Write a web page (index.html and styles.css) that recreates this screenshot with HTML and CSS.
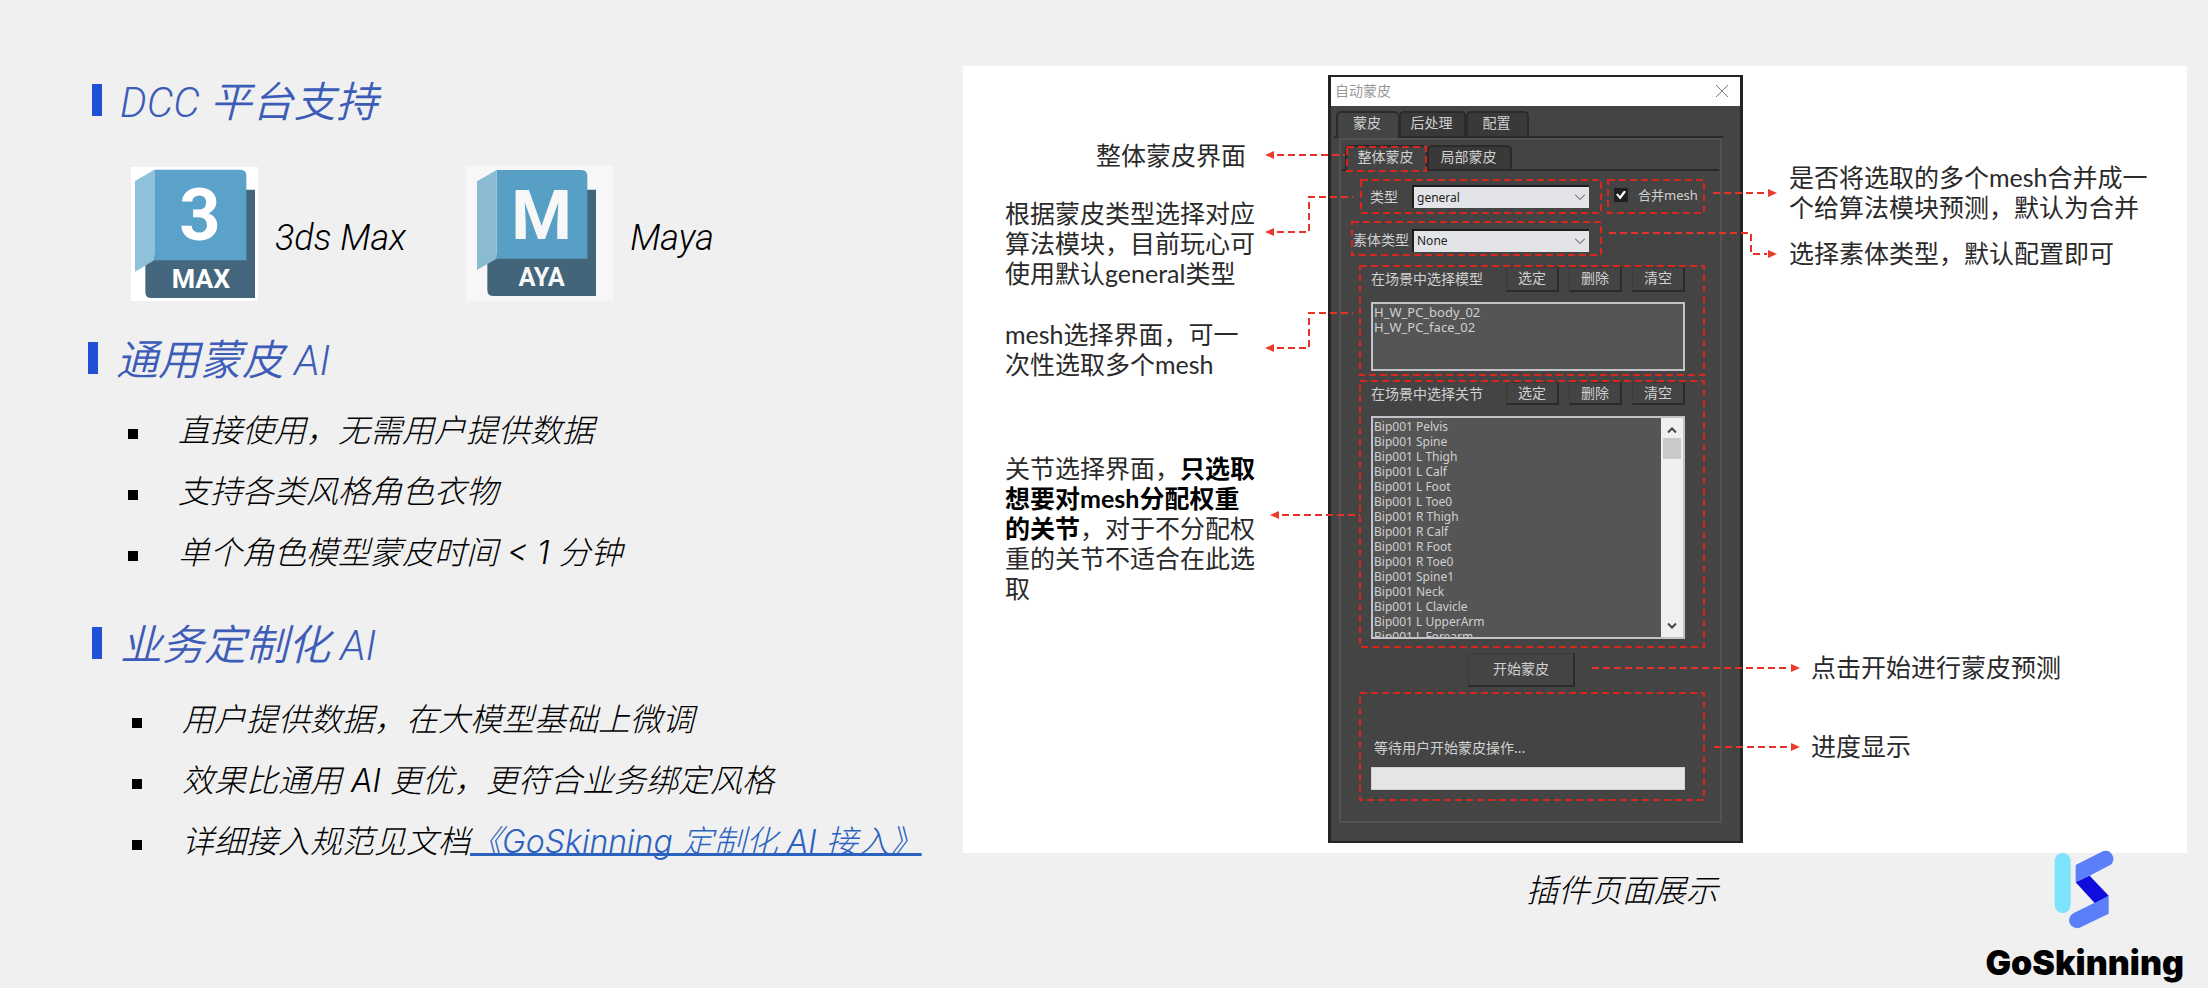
FILE: index.html
```html
<!DOCTYPE html>
<html lang="zh-CN">
<head>
<meta charset="utf-8">
<title>GoSkinning</title>
<link rel="stylesheet" href="styles.css">
</head>
<body>
<main class="slide">
  <div class="intro">
    <section class="topic">
      <h2 class="topic-title">DCC 平台支持</h2>
      <div class="platforms">
        <div class="platform">
          <svg class="platform-icon" width="127" height="134" viewBox="33 36 381 402" aria-hidden="true">
            <rect x="33" y="36" width="381" height="402" fill="#fff"/>
            <path d="M76 300H360V104H405V429H94Q76 429 76 411Z" fill="#44677d"/>
            <path d="M103 44H361Q379 44 379 62V316H103Z" fill="#5aa2c9"/>
            <path d="M45 78L103 44V316L45 350Z" fill="#8ec2da"/>
            <text class="icon-letter" x="240" y="256" text-anchor="middle" font-size="216">3</text>
            <text class="icon-letter" x="243" y="398" text-anchor="middle" font-size="80">MAX</text>
          </svg>
          <span class="platform-name">3ds Max</span>
        </div>
        <div class="platform">
          <svg class="platform-icon" width="147" height="135" viewBox="36 33 441 405" aria-hidden="true">
            <rect x="36" y="33" width="441" height="405" fill="#f7f7f7"/>
            <path d="M100 300H380V104H426V423H119Q100 423 100 404Z" fill="#42657a"/>
            <path d="M128 45H382Q400 45 400 63V311H128Z" fill="#579fc4"/>
            <path d="M69 79L128 45V311L69 345Z" fill="#8abbd3"/>
            <text class="icon-letter dim" x="263" y="252" text-anchor="middle" font-size="208">M</text>
            <text class="icon-letter dim" x="263" y="393" text-anchor="middle" font-size="76">AYA</text>
          </svg>
          <span class="platform-name">Maya</span>
        </div>
      </div>
    </section>
    <section class="topic topic-general">
      <h2 class="topic-title">通用蒙皮 AI</h2>
      <ul class="points">
        <li>直接使用，无需用户提供数据</li>
        <li>支持各类风格角色衣物</li>
        <li>单个角色模型蒙皮时间 &lt; 1 分钟</li>
      </ul>
    </section>
    <section class="topic topic-custom">
      <h2 class="topic-title">业务定制化 AI</h2>
      <ul class="points">
        <li>用户提供数据，在大模型基础上微调</li>
        <li>效果比通用 AI 更优，更符合业务绑定风格</li>
        <li><span>详细接入规范见文档<a class="doc-link" href="#doc">《GoSkinning 定制化 AI 接入》</a></span></li>
      </ul>
    </section>
  </div>

  <div class="demo">
    <div class="stage">
      <div class="notes notes-left">
        <p class="note note-ui">整体蒙皮界面</p>
        <p class="note note-type">根据蒙皮类型选择对应算法模块，目前玩心可使用默认general类型</p>
        <p class="note note-mesh">mesh选择界面，可一次性选取多个mesh</p>
        <p class="note note-joint">关节选择界面，<b>只选取想要对mesh分配权重的关节</b>，对于不分配权重的关节不适合在此选取</p>
      </div>

      <div class="window">
        <div class="titlebar">
          <span>自动蒙皮</span>
          <button class="close" type="button" aria-label="关闭"><svg width="12" height="12" viewBox="0 0 12 12"><path d="M0 0L12 12M12 0L0 12" stroke="#777" fill="none"/></svg></button>
        </div>
        <div class="tabs">
          <button class="tab active" type="button">蒙皮</button>
          <button class="tab" type="button">后处理</button>
          <button class="tab" type="button">配置</button>
        </div>
        <div class="panel">
          <div class="tabs subtabs">
            <button class="tab active framed" type="button">整体蒙皮<svg class="frame"><rect width="100%" height="100%"/></svg></button>
            <button class="tab" type="button">局部蒙皮</button>
          </div>
          <div class="row">
            <div class="framed field">
              <label for="kind">类型</label>
              <span class="picker"><select id="kind"><option>general</option></select><svg class="chevron" width="10" height="6" viewBox="0 0 10 6"><path d="M0 0.500L5 5.500L10 0.500"/></svg></span>
              <svg class="frame"><rect width="100%" height="100%"/></svg>
            </div>
            <div class="framed merge">
              <input type="checkbox" id="merge" checked>
              <label for="merge">合并mesh</label>
              <svg class="frame"><rect width="100%" height="100%"/></svg>
            </div>
          </div>
          <div class="framed field body-type">
            <label for="body">素体类型</label>
            <span class="picker"><select id="body"><option>None</option></select><svg class="chevron" width="10" height="6" viewBox="0 0 10 6"><path d="M0 0.500L5 5.500L10 0.500"/></svg></span>
            <svg class="frame"><rect width="100%" height="100%"/></svg>
          </div>
          <div class="framed group models">
            <div class="group-head">
              <span class="group-label">在场景中选择模型</span>
              <button class="btn" type="button">选定</button>
              <button class="btn" type="button">删除</button>
              <button class="btn" type="button">清空</button>
            </div>
            <div class="listbox">
              <ul>
                <li>H_W_PC_body_02</li>
                <li>H_W_PC_face_02</li>
              </ul>
            </div>
            <svg class="frame"><rect width="100%" height="100%"/></svg>
          </div>
          <div class="framed group joints">
            <div class="group-head">
              <span class="group-label">在场景中选择关节</span>
              <button class="btn" type="button">选定</button>
              <button class="btn" type="button">删除</button>
              <button class="btn" type="button">清空</button>
            </div>
            <div class="listbox">
              <ul>
                <li>Bip001 Pelvis</li>
                <li>Bip001 Spine</li>
                <li>Bip001 L Thigh</li>
                <li>Bip001 L Calf</li>
                <li>Bip001 L Foot</li>
                <li>Bip001 L Toe0</li>
                <li>Bip001 R Thigh</li>
                <li>Bip001 R Calf</li>
                <li>Bip001 R Foot</li>
                <li>Bip001 R Toe0</li>
                <li>Bip001 Spine1</li>
                <li>Bip001 Neck</li>
                <li>Bip001 L Clavicle</li>
                <li>Bip001 L UpperArm</li>
                <li>Bip001 L Forearm</li>
              </ul>
              <div class="scrollbar">
                <svg width="10" height="6" viewBox="0 0 10 6"><path d="M1 5.500L5 1.500L9 5.500"/></svg>
                <span class="thumb"></span>
                <svg class="down" width="10" height="6" viewBox="0 0 10 6"><path d="M1 0.500L5 4.500L9 0.500"/></svg>
              </div>
            </div>
            <svg class="frame"><rect width="100%" height="100%"/></svg>
          </div>
          <button class="btn start" type="button">开始蒙皮</button>
          <div class="framed group progress">
            <span class="group-label" id="status">等待用户开始蒙皮操作...</span>
            <div class="bar" role="progressbar" aria-labelledby="status"></div>
            <svg class="frame"><rect width="100%" height="100%"/></svg>
          </div>
        </div>
      </div>

      <div class="notes notes-right">
        <p class="note note-merge">是否将选取的多个mesh合并成一个给算法模块预测，默认为合并</p>
        <p class="note note-body">选择素体类型，默认配置即可</p>
        <p class="note note-start">点击开始进行蒙皮预测</p>
        <p class="note note-progress">进度显示</p>
      </div>

      <svg class="connectors" viewBox="0 0 1224 787" preserveAspectRatio="none" aria-hidden="true">
        <g class="lines">
          <path d="M314 89H382"/>
          <path d="M314 166H346V131H390"/>
          <path d="M314 282H346V247H390"/>
          <path d="M319 449H397"/>
          <path d="M750 127H804"/>
          <path d="M646 167H788V188H804"/>
          <path d="M629 602H827"/>
          <path d="M751 681H827"/>
        </g>
        <g class="heads">
          <path d="M302 89L311 85V93Z"/>
          <path d="M302 166L311 162V170Z"/>
          <path d="M302 282L311 278V286Z"/>
          <path d="M307 449L316 445V453Z"/>
          <path d="M814 127L805 123V131Z"/>
          <path d="M814 188L805 184V192Z"/>
          <path d="M837 602L828 598V606Z"/>
          <path d="M837 681L828 677V685Z"/>
        </g>
      </svg>
    </div>
    <div class="footer">
      <p class="caption">插件页面展示</p>
      <div class="brand">
        <svg class="brand-mark" width="62" height="80" viewBox="940 687 186 240" aria-hidden="true">
          <rect x="942" y="699" width="48" height="180" rx="24" fill="#7de4fc"/>
          <path d="M1005 735L1088 693A24 24 0 0 1 1110 734L1047 767L1005 787Z" fill="#5a7ff8"/>
          <path d="M1104 827V881L1020 922A23 23 0 0 1 998 880Z" fill="#5a7ff8"/>
          <path d="M1005 787L1047 767L1104 827L1062 849Z" fill="#0e0ddb"/>
        </svg>
        <span class="brand-name">GoSkinning</span>
      </div>
    </div>
  </div>
</main>
</body>
</html>
```
FILE: styles.css
```css
* { box-sizing: border-box; }
body {
  margin: 0;
  background: #f0f0f0;
  color: #000;
  font-family: Roboto, "Noto Sans CJK SC", sans-serif;
}
h2, p, ul { margin: 0; padding: 0; }
ul { list-style: none; }
button { font: inherit; color: inherit; margin: 0; padding: 0; }

.slide {
  display: grid;
  grid-template-columns: 963fr 1245fr;
  min-height: 100vh;
  padding-top: 66px;
}

/* Left column */
.intro { padding: 10px 0 0 88px; font-style: italic; font-weight: 300; white-space: nowrap; }
.topic { padding-left: 4px; }
.topic-title {
  display: flex;
  align-items: center;
  gap: 18px;
  height: 50px;
  padding-bottom: 5px;
  color: #3d5cb8;
  font-size: 42px;
  font-weight: 350;
}
.topic-title::before { content: ""; width: 10px; height: 32px; margin-top: 3px; background: #1f50d6; }
.platforms { display: flex; gap: 60px; margin-top: 40px; padding-left: 39px; }
.platform { display: flex; align-items: center; gap: 17px; }
.platform-icon { display: block; }
.platform-name { padding-top: 8px; font-size: 36px; font-weight: 300; }
.icon-letter { fill: #fff; font-family: Roboto, sans-serif; font-style: normal; font-weight: 700; }
.icon-letter.dim { fill: #f7f7f7; }
.topic-general { margin-top: 33px; padding-left: 0; }
.topic-custom { margin-top: 37px; }
.points { padding: 15px 0 0 40px; font-family: Inter, "Noto Sans CJK SC", sans-serif; }
.topic-custom .points { padding-top: 19px; }
.points li { display: flex; align-items: center; gap: 40px; height: 61px; padding-bottom: 4px; font-size: 32px; }
.points li::before { content: ""; width: 10px; height: 10px; margin-top: 12px; background: #000; }
.doc-link {
  color: #2b62c0;
  text-decoration: underline;
  text-decoration-thickness: 3px;
  text-decoration-skip-ink: none;
  text-underline-offset: 0;
}

/* Annotated plug-in window */
.demo { padding-right: 21px; }
.stage { position: relative; display: flex; padding: 9px 0 10px; background: #fff; }
.notes { flex: 1 1 365px; font-family: Lato, "Noto Sans CJK SC", sans-serif; font-size: 25px; line-height: 30px; color: #2a2a2a; }
.notes-left { padding-left: 42px; }
.notes-left .note { max-width: 252px; }
.note-ui { margin-top: 65px; padding-left: 91px; }
.note-type { margin-top: 28px; }
.note-mesh { margin-top: 31px; }
.note-joint { margin-top: 74px; }
.notes-right { flex-basis: 444px; padding-left: 46px; }
.notes-right .note { max-width: 366px; }
.note-merge { margin-top: 87px; }
.note-body { margin-top: 16px; }
.note-start { margin-top: 384px; padding-left: 22px; }
.note-progress { margin-top: 49px; padding-left: 22px; }
.note b { color: #000; }

.connectors { position: absolute; inset: 0; width: 100%; height: 100%; pointer-events: none; }
.lines path { fill: none; stroke: #e8312b; stroke-width: 2; stroke-dasharray: 7 4; }
.heads path { fill: #ee3a2c; }

.window {
  flex: 0 0 415px;
  border: solid #242424;
  border-width: 2px 3px;
  background: #444;
  color: #d0d0d0;
  font-family: "Noto Sans", "Noto Sans CJK SC", sans-serif;
  font-size: 14px;
  line-height: 20px;
}
.titlebar {
  display: flex;
  align-items: center;
  justify-content: space-between;
  height: 29px;
  padding: 0 12px 2px 4px;
  background: #fff;
  color: #999;
}
.close { display: flex; border: 0; background: none; }
.tabs { display: flex; height: 27px; margin: 5px 17px 0 3px; padding-left: 2px; border-bottom: 2px solid #2a2a2a; }
.tab {
  width: 67px;
  padding: 0 2px 3px 0;
  border: 2px solid #2a2a2a;
  border-bottom: 0;
  border-radius: 5px 5px 0 0;
  background: #393939;
}
.tab.active { width: 63px; margin-bottom: -2px; padding-bottom: 5px; border-right-width: 1px; background: #444; }
.tab:last-child { width: 63px; }
.panel { margin: 0 18px 18px 8px; border: 2px solid #525252; }
.subtabs { height: 26px; margin: 5px 1px 0; padding-left: 3px; }
.subtabs .tab.active { width: 82px; }
.subtabs .tab:last-child { width: 85px; }

.framed { position: relative; }
.frame { position: absolute; inset: 0; width: 100%; height: 100%; overflow: visible; pointer-events: none; }
.frame rect { fill: none; stroke: #d8261f; stroke-width: 2; stroke-dasharray: 7 4; }

.row { display: flex; gap: 7px; margin: 9px 0 0 20px; }
.field { display: flex; align-items: center; justify-content: space-between; width: 240px; height: 33px; padding: 0 12px 0 9px; }
.body-type { width: 249px; margin: 9px 0 0 11px; padding-top: 3px; padding-left: 1px; }
.picker { position: relative; display: flex; width: 177px; }
.picker select {
  width: 100%;
  height: 23px;
  padding: 0 3px;
  border: 0 solid #1d1d1d;
  border-width: 2px 0 0 2px;
  border-radius: 0;
  appearance: none;
  background: #e2e4e8;
  color: #222;
  font: 12px/20px "Noto Sans", sans-serif;
}
.chevron { position: absolute; right: 4px; top: 9px; }
.chevron path { fill: none; stroke: #444; }
.merge { display: flex; align-items: center; gap: 10px; width: 96px; height: 33px; padding: 0 0 3px 6px; font-size: 13px; }
.merge label { white-space: nowrap; }
.merge input {
  flex: none;
  display: grid;
  place-items: center;
  width: 14px;
  height: 14px;
  margin: 0;
  appearance: none;
  background: #1f1f1f;
}
.merge input:checked::after {
  content: "";
  width: 10px;
  height: 9px;
  background: #fff;
  clip-path: polygon(0 45%, 18% 32%, 38% 60%, 82% 0, 100% 14%, 42% 100%);
}

.group { width: 344px; margin-left: 19px; padding: 0 19px 0 11px; }
.models { margin-top: 11px; padding-bottom: 4px; }
.joints { margin-top: 6px; padding-bottom: 8px; }
.group-head { display: flex; align-items: stretch; gap: 10px; height: 26px; padding-top: 1px; line-height: 24px; }
.joints .group-head { height: 24px; }
.group-label { flex: 1; white-space: nowrap; }
.btn {
  width: 53px;
  padding-bottom: 2px;
  border: solid #2b2b2b;
  border-width: 1px 2px 2px 1px;
  border-color: #3a3a3a #2b2b2b #2b2b2b #3a3a3a;
  background: #444;
  line-height: 20px;
}
.listbox {
  display: flex;
  margin-top: 10px;
  border: 2px solid #c2c3c8;
  background: #555;
  overflow: hidden;
  font-size: 13px;
  line-height: 15px;
}
.listbox ul { flex: 1; padding: 1px 0 0 1px; white-space: nowrap; }
.models .listbox { height: 69px; }
.joints .listbox { height: 223px; margin-top: 11px; font-size: 12px; }
.scrollbar { display: flex; flex-direction: column; align-items: center; width: 22px; padding: 9px 0 8px; background: #f0f0f0; }
.scrollbar path { fill: none; stroke: #444; stroke-width: 2; }
.scrollbar .down { margin-top: auto; }
.thumb { width: 18px; height: 21px; margin-top: 5px; background: #c9c9c9; }
.start { display: block; width: 107px; height: 34px; margin: 6px 0 0 127px; }
.progress { display: flex; flex-direction: column; margin-top: 6px; margin-bottom: 21px; padding-top: 45px; padding-bottom: 10px; }
.progress .group-label { flex: none; padding-left: 3px; }
.bar { height: 23px; margin-top: 9px; border: 1px solid #d2d2d2; background: #e5e5e5; }

/* Caption and brand */
.footer { display: flex; justify-content: space-between; padding: 0 3px 0 563px; }
.caption { padding-top: 18px; font-size: 32px; font-style: italic; font-weight: 300; line-height: 40px; white-space: nowrap; }
.brand { position: relative; display: flex; flex-direction: column; align-items: center; margin-top: -4px; }
.brand-mark { display: block; }
.brand-name { margin-top: 14px; font-family: Inter, sans-serif; font-size: 34px; font-weight: 900; line-height: 40px; }
```
